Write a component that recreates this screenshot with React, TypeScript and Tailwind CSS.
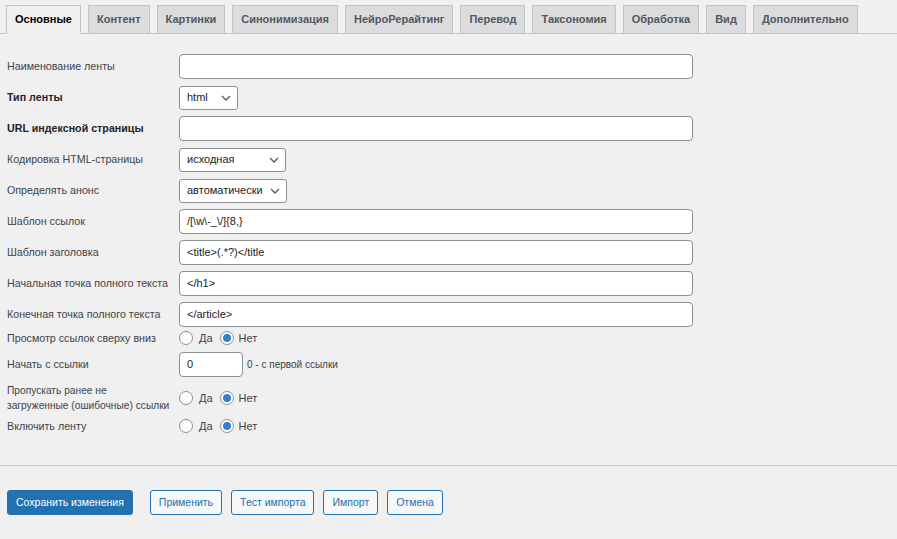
import React from 'react';

const tabs = ['Основные', 'Контент', 'Картинки', 'Синонимизация', 'НейроРерайтинг', 'Перевод', 'Таксономия', 'Обработка', 'Вид', 'Дополнительно'];

const Chevron: React.FC = () => (
  <svg width="10" height="6" viewBox="0 0 10 6" className="shrink-0">
    <path d="M1 1l4 4 4-4" fill="none" stroke="#50575e" strokeWidth="1.3" />
  </svg>
);

const TextInput: React.FC<{ value?: string; className?: string }> = ({ value = '', className = 'w-[514px]' }) => (
  <div className={`${className} h-[25px] bg-white border border-[#8c8f94] rounded-[4px] px-[7px] flex items-center text-[11px] text-[#1d2327]`}>
    {value}
  </div>
);

const Select: React.FC<{ value: string; width: string }> = ({ value, width }) => (
  <div className={`${width} h-[24px] bg-white border border-[#8c8f94] rounded-[3px] pl-[7px] pr-[6px] flex items-center justify-between text-[11px] text-[#1d2327]`}>
    <span>{value}</span>
    <Chevron />
  </div>
);

const Radio: React.FC<{ checked?: boolean }> = ({ checked }) => (
  <span className="w-[14px] h-[14px] rounded-full border border-[#8c8f94] bg-white flex items-center justify-center shrink-0">
    {checked && <span className="w-[8px] h-[8px] rounded-full bg-[#3582c4]" />}
  </span>
);

const YesNo: React.FC = () => (
  <div className="flex items-center text-[11px] text-[#3c434a]">
    <Radio />
    <span className="ml-[6px]">Да</span>
    <span className="ml-[7px]"><Radio checked /></span>
    <span className="ml-[5px]">Нет</span>
  </div>
);

const Row: React.FC<{ label: React.ReactNode; bold?: boolean; h?: string; size?: string; children: React.ReactNode }> = ({ label, bold, h = 'h-[31px]', size = 'text-[10.7px]', children }) => (
  <div className={`flex items-center ${h}`}>
    <div className={`w-[172px] shrink-0 whitespace-nowrap ${size} leading-[15px] ${bold ? 'font-bold text-[#1d2327]' : 'text-[#3c434a]'}`}>{label}</div>
    {children}
  </div>
);

export default function App() {
  return (
    <div className="w-full min-h-[539px] bg-[#f0f0f1] font-['Liberation_Sans',Arial,sans-serif]">
      <div className="flex items-end gap-[7px] pl-[6px] pt-[5px] border-b border-[#c3c4c7]">
        {tabs.map((t, i) => (
          <div
            key={t}
            className={`-mb-px h-[29px] px-[8px] flex items-center border border-[#c3c4c7] text-[11px] font-bold ${
              i === 0 ? 'bg-[#f0f0f1] border-b-[#f0f0f1] text-black' : 'bg-[#dcdcde] text-[#50575e]'
            }`}
          >
            {t}
          </div>
        ))}
      </div>

      <div className="pl-[7px] pt-[17px]">
        <Row label="Наименование ленты"><TextInput /></Row>
        <Row label="Тип ленты" bold><Select value="html" width="w-[59px]" /></Row>
        <Row label="URL индексной страницы" bold><TextInput /></Row>
        <Row label="Кодировка HTML-страницы"><Select value="исходная" width="w-[107px]" /></Row>
        <Row label="Определять анонс"><Select value="автоматически" width="w-[108px]" /></Row>
        <Row label="Шаблон ссылок"><TextInput value="/[\w\-_\/]{8,}" /></Row>
        <Row label="Шаблон заголовка"><TextInput value="<title>(.*?)</title" /></Row>
        <Row label="Начальная точка полного текста"><TextInput value="</h1>" /></Row>
        <Row label="Конечная точка полного текста"><TextInput value="</article>" /></Row>
        <Row label="Просмотр ссылок сверху вниз" h="h-[16px]"><YesNo /></Row>
        <div className="mt-[6px]">
          <Row label="Начать с ссылки" h="h-[25px]">
            <TextInput value="0" className="w-[64px]" />
            <span className="ml-[4px] text-[10px] text-[#3c434a]">0 - с первой ссылки</span>
          </Row>
        </div>
        <div className="mt-[6px]">
          <Row label={<>Пропускать ранее не<br />загруженные (ошибочные) ссылки</>} h="h-[30px]" size="text-[10.2px]"><YesNo /></Row>
        </div>
        <div className="mt-[5px]">
          <Row label="Включить ленту" h="h-[16px]"><YesNo /></Row>
        </div>
      </div>

      <div className="mt-[31px] border-t border-[#c8c9cc]" />

      <div className="flex items-center pl-[7px] pt-[24px] text-[10.5px]">
        <button className="h-[25px] px-[8px] rounded-[3px] bg-[#2271b1] border border-[#2271b1] text-white">Сохранить изменения</button>
        <div className="flex items-center gap-[9px] ml-[17px]">
          {['Применить', 'Тест импорта', 'Импорт', 'Отмена'].map(b => (
            <button key={b} className="h-[25px] px-[8px] rounded-[3px] bg-[#f6f7f7] border border-[#2271b1] text-[#2271b1]">{b}</button>
          ))}
        </div>
      </div>
    </div>
  );
}
